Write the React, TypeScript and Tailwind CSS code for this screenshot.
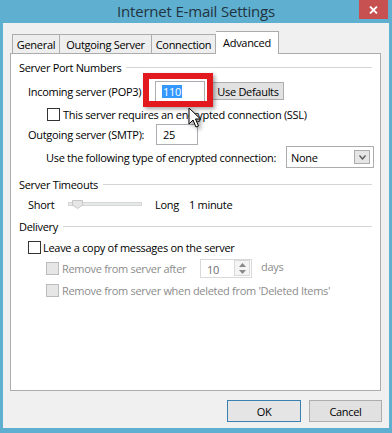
import React from 'react';

// Windows 8 style "Internet E-mail Settings" dialog, Advanced tab

function GroupHeader({ title, className = '' }: { title: string; className?: string }) {
    return (
        <div className={`flex items-center h-[16px] pl-[8px] pr-[8px] ${className}`}>
            <span>{title}</span>
            <div className="flex-1 h-px bg-[#d5d5d5] ml-[5px]" />
        </div>
    );
}

function CheckBox({ disabled = false }: { disabled?: boolean }) {
    return (
        <span
            className={`inline-block w-[13px] h-[13px] border shrink-0 ${
                disabled ? 'border-[#bcbcbc] bg-[#e6e6e6]' : 'border-[#333333] bg-white'
            }`}
        />
    );
}

function Cursor() {
    return (
        <svg width="16" height="22" viewBox="0 0 16 22" className="drop-shadow-[2px_2px_2px_rgba(0,0,0,0.45)]">
            <path d="M1 1 L1 17 L5 13 L8 20 L10.5 19 L7.5 12 L12.5 12 Z" fill="white" stroke="black" strokeWidth="1" strokeLinejoin="miter" />
        </svg>
    );
}

export default function App() {
    return (
        <div className="w-[392px] h-[433px] bg-[#5fafd0] flex flex-col px-[3px] pb-[5px] font-['Open_Sans',sans-serif] text-[11px] tracking-[-0.3px] whitespace-nowrap text-black leading-none">
            {/* Title bar */}
            <div className="relative h-[25px] flex items-center justify-center">
                <span className="text-[15px] text-[#1f3440] tracking-[-0.2px]">Internet E-mail Settings</span>
                <div className="absolute right-[1px] top-0 w-[29px] h-[19px] bg-[#c75050] flex items-center justify-center">
                    <svg width="9" height="8" viewBox="0 0 9 8">
                        <path d="M1 0.5 L8 7.5 M8 0.5 L1 7.5" stroke="white" strokeWidth="1.8" />
                    </svg>
                </div>
            </div>

            {/* Client area */}
            <div className="flex-1 bg-[#f0f0f0] flex flex-col pt-[8px] pl-[7px] pr-[8px] pb-[6px]">
                {/* Tabs */}
                <div className="relative z-10 flex items-end h-[23px] ml-[2px] mb-[-1px]">
                    <div className="w-[48px] h-[20px] border border-[#acacac] bg-[#eeeeee] flex items-center justify-center">General</div>
                    <div className="w-[92px] h-[20px] border border-[#acacac] border-l-0 bg-[#eeeeee] flex items-center justify-center">Outgoing Server</div>
                    <div className="w-[64px] h-[20px] border border-[#acacac] border-l-0 bg-[#eeeeee] flex items-center justify-center">Connection</div>
                    <div className="w-[63px] h-[23px] border border-b-0 border-[#acacac] border-l-0 bg-white flex items-start justify-center pt-[5px]">Advanced</div>
                </div>

                {/* Tab panel */}
                <div className="relative h-[338px] border border-[#acacac] bg-white pt-[5px]">
                    <GroupHeader title="Server Port Numbers" />

                    <div className="flex items-center h-[22px] mt-[5px] pl-[17px]">
                        <span className="w-[127px] shrink-0">Incoming server (POP3)</span>
                        <div className="w-[50px] h-[21px] border border-[#abadb3] bg-white flex items-center pl-[6px]">
                            <span className="bg-[#3399ff] text-white px-[1px] py-[1px]">110</span>
                        </div>
                        <button className="ml-[7px] w-[72px] h-[18px] border border-[#adadad] bg-[#e1e1e1] flex items-center justify-center">Use Defaults</button>
                    </div>

                    <div className="flex items-center h-[16px] mt-[4px] pl-[36px]">
                        <CheckBox />
                        <span className="ml-[3px]">This server requires an encrypted connection (SSL)</span>
                    </div>

                    <div className="flex items-center h-[21px] mt-[2px] pl-[17px]">
                        <span className="w-[128px] shrink-0">Outgoing server (SMTP):</span>
                        <div className="w-[42px] h-[21px] border border-[#abadb3] bg-white flex items-center pl-[6px]">25</div>
                    </div>

                    <div className="flex items-center h-[22px] mt-[1px] pl-[35px]">
                        <span className="w-[240px] shrink-0">Use the following type of encrypted connection:</span>
                        <div className="w-[88px] h-[22px] border border-[#acacac] bg-white flex items-center justify-between pl-[4px] pr-[3px]">
                            <span>None</span>
                            <div className="w-[16px] h-[14px] border border-[#acacac] bg-[#e5e5e5] flex items-center justify-center">
                                <svg width="7" height="5" viewBox="0 0 7 5">
                                    <path d="M0.5 0.5 L3.5 4 L6.5 0.5" fill="none" stroke="#555" strokeWidth="1.3" />
                                </svg>
                            </div>
                        </div>
                    </div>

                    <GroupHeader title="Server Timeouts" className="mt-[8px]" />

                    <div className="flex items-center h-[16px] mt-[4px] pl-[17px]">
                        <span className="w-[40px] shrink-0">Short</span>
                        <div className="relative w-[74px] h-[4px] border border-[#d6d6d6] bg-[#e7eaea]">
                            <svg width="11" height="9" viewBox="0 0 11 9" className="absolute left-[3px] top-[-3px]">
                                <path d="M0.5 0.5 H10.5 V5 L5.5 8.5 L0.5 5 Z" fill="#e6e6e6" stroke="#c5c5c5" />
                            </svg>
                        </div>
                        <span className="ml-[13px] w-[34px] shrink-0">Long</span>
                        <span>1 minute</span>
                    </div>

                    <GroupHeader title="Delivery" className="mt-[6px]" />

                    <div className="flex items-center h-[16px] mt-[5px] pl-[17px]">
                        <CheckBox />
                        <span className="ml-[2px]">Leave a copy of messages on the server</span>
                    </div>

                    <div className="flex items-center h-[20px] mt-[3px] pl-[35px] text-[#8c8c8c]">
                        <CheckBox disabled />
                        <span className="ml-[3px] w-[138px] shrink-0">Remove from server after</span>
                        <div className="w-[52px] h-[19px] border border-[#d9d9d9] bg-white flex items-center justify-between pl-[6px] pr-[1px]">
                            <span className="text-[#6d6d6d] mt-[2px]">10</span>
                            <div className="w-[16px] h-[16px] border border-[#d9d9d9] bg-[#f4f4f4] flex flex-col items-center justify-around">
                                <svg width="7" height="4" viewBox="0 0 7 4"><path d="M0 4 L3.5 0 L7 4 Z" fill="#8a8a8a" /></svg>
                                <svg width="7" height="4" viewBox="0 0 7 4"><path d="M0 0 L3.5 4 L7 0 Z" fill="#8a8a8a" /></svg>
                            </div>
                        </div>
                        <span className="ml-[9px] mb-[3px]">days</span>
                    </div>

                    <div className="flex items-center h-[16px] mt-[4px] pl-[35px] text-[#8c8c8c]">
                        <CheckBox disabled />
                        <span className="ml-[3px]">Remove from server when deleted from 'Deleted Items'</span>
                    </div>

                    {/* Red highlight annotation */}
                    <div className="absolute left-[132px] top-[19px] w-[70px] h-[34px] border-[6px] border-[#e2191e] shadow-[2px_2px_4px_rgba(0,0,0,0.35)]" />
                    {/* Mouse pointer */}
                    <div className="absolute left-[177px] top-[53px]">
                        <Cursor />
                    </div>
                </div>

                {/* Buttons */}
                <div className="flex justify-end gap-[8px] mt-[9px] mr-[-1px]">
                    <button className="w-[74px] h-[22px] border border-[#3c7fb1] bg-[#e5e5e5] flex items-center justify-center">OK</button>
                    <button className="w-[73px] h-[22px] border border-[#adadad] bg-[#e1e1e1] flex items-center justify-center">Cancel</button>
                </div>
            </div>
        </div>
    );
}
